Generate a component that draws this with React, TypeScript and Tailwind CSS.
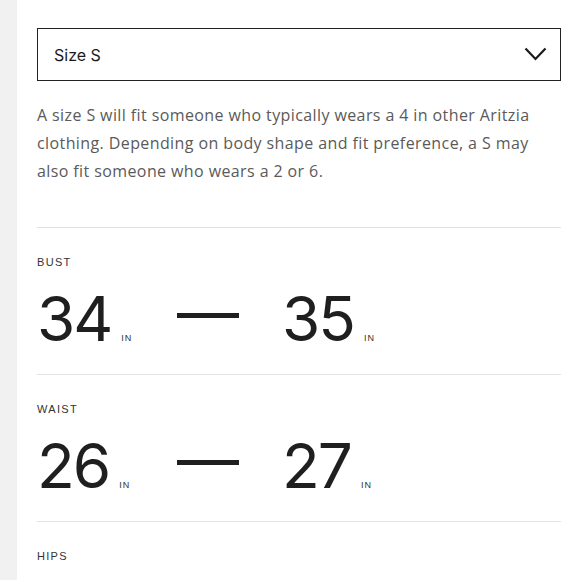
import React from 'react';

const measures = [
  { label: 'BUST', from: '34', to: '35' },
  { label: 'WAIST', from: '26', to: '27' },
];

const Chevron = () => (
  <svg width="23" height="15" viewBox="0 0 23 15" fill="none">
    <path d="M1.5 1.5 L11.5 12 L21.5 1.5" stroke="#1a1a1a" strokeWidth="2.2" />
  </svg>
);

const Value = ({ n }: { n: string }) => (
  <div className="flex items-baseline">
    <span className="text-[62px] leading-none text-[#1f1f1f] tracking-[-2px]" style={{ fontFamily: 'Inter, sans-serif' }}>
      {n}
    </span>
    <span className="ml-[10px] text-[9px] tracking-[1px] text-[#333]">IN</span>
  </div>
);

export default function App() {
  return (
    <div className="flex w-[580px] h-[580px] overflow-hidden bg-white" style={{ fontFamily: '"Liberation Sans", sans-serif' }}>
      <div className="w-[17px] shrink-0 bg-[#f1f1f1]" />
      <div className="flex-1 pl-[20px] pr-[19px]">
        <div className="mt-[28px] h-[53px] border-[1.5px] border-[#222] flex items-center justify-between pl-[16px] pr-[13px]">
          <span className="text-[16px] text-[#1a1a1a]" style={{ fontFamily: 'Inter, sans-serif' }}>Size S</span>
          <Chevron />
        </div>
        <p className="mt-[20px] text-[16px] leading-[28px] tracking-[0.4px] text-[#5a5a5a]" style={{ fontFamily: '"Open Sans", sans-serif' }}>
          A size S will fit someone who typically wears a 4 in other Aritzia clothing. Depending on body shape and fit preference, a S may also fit someone who wears a 2 or 6.
        </p>
        <div className="mt-[42px] border-t border-[#e2e2e2]" />
        {measures.map((m) => (
          <div key={m.label} className="border-b border-[#e2e2e2] h-[147px]">
            <div className="pt-[29px] text-[11px] leading-none tracking-[1.3px] text-[#333]">{m.label}</div>
            <div className="mt-[20px] flex items-center">
              <div className="w-[140px]">
                <Value n={m.from} />
              </div>
              <div className="w-[62px] h-[5px] bg-[#1f1f1f] -mt-[7px]" />
              <div className="ml-[43px]">
                <Value n={m.to} />
              </div>
            </div>
          </div>
        ))}
        <div className="pt-[29px] text-[11px] leading-none tracking-[1.3px] text-[#333]">HIPS</div>
      </div>
    </div>
  );
}
